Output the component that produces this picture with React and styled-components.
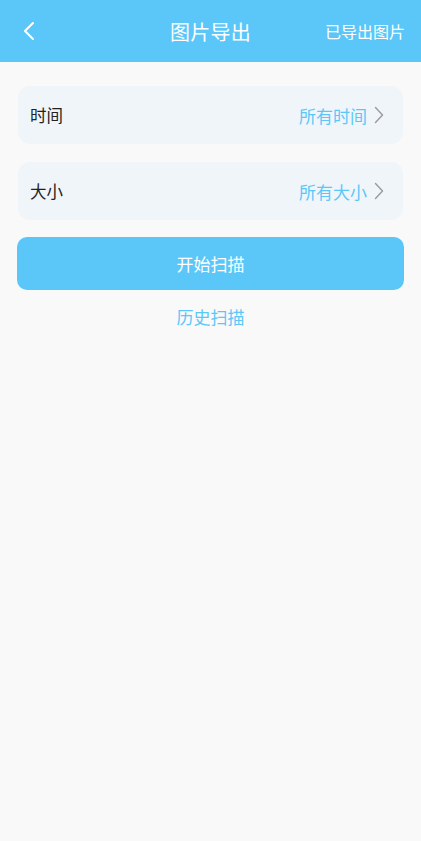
import React from "react";
import styled, { createGlobalStyle } from "styled-components";

const Global = createGlobalStyle`
  html, body { margin: 0; padding: 0; background: #f9f9f9; }
  body { font-family: "Noto Sans CJK SC", "Noto Sans", sans-serif; }
  * { box-sizing: border-box; }
`;

const Page = styled.div`
  width: 421px;
  min-height: 841px;
  background: #f9f9f9;
  display: flex;
  flex-direction: column;
`;

const Header = styled.header`
  height: 62px;
  background: #5bc7f8;
  display: grid;
  grid-template-columns: 1fr auto 1fr;
  align-items: center;
  padding: 0 16px;
  color: #fff;
`;

const BackButton = styled.div`
  display: flex;
  align-items: center;
  padding-left: 6px;
`;

const Title = styled.h1`
  margin: 0;
  font-size: 20px;
  font-weight: 400;
  letter-spacing: 0.3px;
`;

const HeaderAction = styled.div`
  justify-self: end;
  font-size: 16px;
`;

const Content = styled.main`
  padding: 24px 18px 0 18px;
  display: flex;
  flex-direction: column;
`;

const Card = styled.div`
  height: 58px;
  background: #f0f5f9;
  border-radius: 12px;
  display: flex;
  align-items: center;
  justify-content: space-between;
  padding: 0 19px 0 12px;
  margin-bottom: ${(p) => p.$gap}px;
`;

const Label = styled.span`
  font-size: 16.5px;
  color: #222;
`;

const ValueWrap = styled.span`
  display: flex;
  align-items: center;
  gap: 7px;
  color: #5bc7f8;
  font-size: 17px;
`;

const PrimaryButton = styled.button`
  height: 53px;
  border: none;
  border-radius: 10px;
  background: #5bc7f8;
  color: #fff;
  font-family: inherit;
  font-size: 17px;
  margin: 0 -1px;
`;

const LinkText = styled.div`
  text-align: center;
  color: #5bc7f8;
  font-size: 17px;
  margin-top: 14px;
`;

const Chevron = () => (
  <svg width="10" height="18" viewBox="0 0 10 18">
    <path d="M1.5 1.5 L8.5 9 L1.5 16.5" fill="none" stroke="#9a9a9a" strokeWidth="1.4" strokeLinecap="round" strokeLinejoin="round" />
  </svg>
);

const Row = ({ label, value, gap }) => (
  <Card $gap={gap}>
    <Label>{label}</Label>
    <ValueWrap>
      {value}
      <Chevron />
    </ValueWrap>
  </Card>
);

export default function App() {
  return (
    <Page>
      <Global />
      <Header>
        <BackButton>
          <svg width="14" height="20" viewBox="0 0 14 20">
            <path d="M11 2 L3 10 L11 18" fill="none" stroke="#fff" strokeWidth="2" strokeLinecap="round" strokeLinejoin="round" />
          </svg>
        </BackButton>
        <Title>图片导出</Title>
        <HeaderAction>已导出图片</HeaderAction>
      </Header>
      <Content>
        <Row label="时间" value="所有时间" gap={18} />
        <Row label="大小" value="所有大小" gap={17} />
        <PrimaryButton>开始扫描</PrimaryButton>
        <LinkText>历史扫描</LinkText>
      </Content>
    </Page>
  );
}
